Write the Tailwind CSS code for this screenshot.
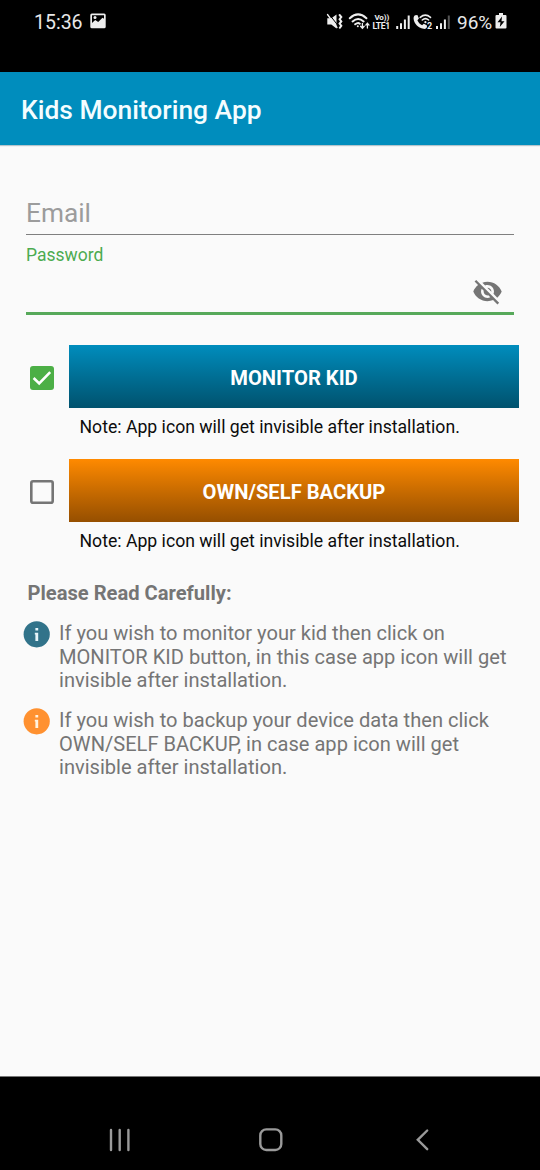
<!DOCTYPE html>
<html lang="en">
<head>
<meta charset="utf-8">
<title>Kids Monitoring App</title>
<script src="https://cdn.jsdelivr.net/npm/@tailwindcss/browser@4"></script>
</head>
<body class="w-[540px] h-[1170px] flex flex-col overflow-hidden bg-[#fafafa] font-['Roboto',sans-serif] text-[#757575]">
  <!-- Status bar -->
  <header class="h-[72px] shrink-0 bg-black text-[#e8e8e8]">
    <div class="h-[43px] flex items-center pl-[34px]">
      <span class="w-[56px] pt-[1px] text-[19.5px] leading-[43px] whitespace-nowrap">15:36</span>
      <svg class="w-[16px] h-[16px] -mt-[1px]" viewBox="0 0 16 16"><rect x=".3" y=".5" width="15.4" height="14.8" rx="1.5" fill="#eee"/><path d="M2 2.3h12v3.4l-1.5-1L8.2 9 5.2 7 2 10z" fill="#000"/><circle cx="5" cy="4.6" r="1.5" fill="#eee"/></svg>
      <svg class="ml-[220px] w-[126px] h-[24px]" viewBox="326 9 126 24" fill="none" stroke="#eee" stroke-width="1.7" stroke-linecap="round">
        <path d="M327.3 17.2h4l5.2-3.8v14l-5.2-4h-4z" fill="#eee" stroke="none"/>
        <path d="M329 13l10.5 13.5" stroke="#000" stroke-width="1"/>
        <path d="M327.5 13.5l9.5 13" stroke-width="1.3"/>
        <path d="M339.6 14l1.7 2-1.7 2.2 1.7 2.2-1.7 2.2 1.7 2.2-1.5 2" stroke-width="2"/>
        <path d="M349.8 17.2q8.3-7.6 16.6 0M352.6 20.4q5.5-4.8 11 0M355.2 23.3q2.8-2.2 4.6-.6" stroke-width="2"/>
        <circle cx="357.8" cy="25.2" r="1" fill="#eee" stroke="none"/>
        <path d="M362.4 22.5v4.6m-1.8-1.8 1.8 2 1.8-2M367.4 27v-4.6m-1.6 1.7 1.6-1.9 1.6 1.9" stroke-width="1.3"/>
        <g fill="#eee" stroke="none" font-family="Roboto, sans-serif" font-weight="700">
          <text x="374.4" y="19.3" font-size="8" letter-spacing="-.1">Vo))</text>
          <text x="372.5" y="28.3" font-size="8.6" letter-spacing="-.35">LTE1</text>
          <text x="427" y="27.7" font-size="9">2</text>
        </g>
        <g stroke-linecap="butt" stroke-width="2">
          <path d="M397.2 25v3M401 22.2V28M404.9 18.5V28M408.7 14.5V28"/>
          <path d="M437 25v3M441 22.2V28M444.9 18.5V28"/>
          <path d="M448.8 14.5V28" stroke="#555"/>
        </g>
        <path d="M415.2 14.2l2.2-.3 1.5 3.7-1.5 1.7c1 2.3 2.4 3.8 4.7 5l1.7-1.5 3 1.4.2 1.9c-.6 1.6-2 2-3.6 1.7-5.3-.9-9.4-5.2-9.8-10-.1-1.7.3-3 1.6-3.6z" fill="#eee" stroke="none"/>
        <path d="M420.2 16.4q5.1-4.4 10.3 0M422.3 19q3.1-2.7 6.3 0" stroke-width="1.6"/><circle cx="425.4" cy="21.2" r="1.1" fill="#eee" stroke="none"/>
      </svg>
      <span class="ml-[5px] w-[38px] pt-[1px] text-[19px] leading-[43px] whitespace-nowrap">96%</span>
      <svg class="w-[12px] h-[18px] -mt-[1px]" viewBox="0 0 12 18"><path d="M4 1h4v2h2.5q1 0 1 1v11.5q0 1-1 1h-9q-1 0-1-1V4q0-1 1-1H4z" fill="#eee"/><path d="M7 4.5 2.5 10.3h3L4.8 15l4.7-5.8h-3z" fill="#000"/></svg>
    </div>
  </header>
  <!-- App bar -->
  <div class="h-[73px] shrink-0 bg-[#008dbd] flex items-center pl-[21px] pt-[5px] border-b border-[#008dbd] shadow-[0_1px_1px_#b5c5cc]">
    <h1 class="text-[26.4px] leading-[31px] font-medium text-[#f4fdff] whitespace-nowrap">Kids Monitoring App</h1>
  </div>
  <main class="h-[931px] shrink-0">
    <div class="mx-[26px] h-[90px] border-b border-[#7f7f7f] flex items-end pb-[5px]">
      <span class="text-[26.25px] leading-[31px] text-[#9c9c9c]">Email</span>
    </div>
    <div class="mx-[26px] h-[80px] border-b-[3px] border-[#57a95a] flex flex-col">
      <span class="pt-[9px] text-[17.5px] leading-[22px] text-[#4cab50]">Password</span>
      <svg class="self-end mr-[11px] mt-[10px] w-[31px] h-[31px]" viewBox="0 0 24 24" fill="#757575"><path d="M12 7c2.76 0 5 2.24 5 5 0 .65-.13 1.26-.36 1.83l2.92 2.92c1.51-1.26 2.7-2.89 3.43-4.75-1.73-4.39-6-7.5-11-7.5-1.4 0-2.74.25-3.98.7l2.16 2.16C10.74 7.13 11.35 7 12 7zM2 4.27l2.28 2.28.46.46C3.08 8.3 1.78 10.02 1 12c1.73 4.39 6 7.5 11 7.5 1.55 0 3.03-.3 4.38-.84l.42.42L19.73 22 21 20.73 3.27 3 2 4.27zM7.53 9.8l1.55 1.55c-.05.21-.08.43-.08.65 0 1.66 1.34 3 3 3 .22 0 .44-.03.65-.08l1.55 1.55c-.67.33-1.41.53-2.2.53-2.76 0-5-2.24-5-5 0-.79.2-1.53.53-2.2zm4.31-.78l3.15 3.15.02-.16c0-1.66-1.34-3-3-3l-.17.01z"/></svg>
    </div>
    <div class="mt-[30px] h-[63px] flex items-center pl-[30px]">
      <div class="mt-[3px] w-[24px] h-[24px] rounded-[3px] bg-[#4caf46]">
        <svg class="w-[24px] h-[24px]" viewBox="0 0 24 24" fill="none" stroke="#fff" stroke-width="2.6"><path d="M3.6 12 9.2 17.4 20.2 6.2"/></svg>
      </div>
      <button class="ml-[15px] w-[450px] h-[63px] bg-linear-to-b from-[#008dbd] to-[#00526e] text-white font-bold text-[20.2px] leading-[23px] pt-[3px]">MONITOR KID</button>
    </div>
    <p class="pl-[79.5px] pt-[8px] h-[51px] text-[17.65px] leading-[22px] text-[#0c0c0c] whitespace-nowrap">Note: App icon will get invisible after installation.</p>
    <div class="h-[63px] flex items-center pl-[30px]">
      <svg class="mt-[3px] w-[24px] h-[24px]" viewBox="0 0 24 24"><rect x="1.3" y="1.3" width="21.4" height="21.4" rx="1.8" fill="none" stroke="#757575" stroke-width="2.6"/></svg>
      <button class="ml-[15px] w-[450px] h-[63px] bg-linear-to-b from-[#ff8a00] to-[#964f00] text-white font-bold text-[20.2px] leading-[23px] pt-[3px]">OWN/SELF BACKUP</button>
    </div>
    <p class="pl-[79.5px] pt-[8px] h-[51px] text-[17.65px] leading-[22px] text-[#0c0c0c] whitespace-nowrap">Note: App icon will get invisible after installation.</p>
    <h2 class="pl-[27.5px] pt-[8px] text-[20.15px] leading-[24px] font-bold whitespace-nowrap">Please Read Carefully:</h2>
    <div class="mt-[16px] pl-[23px] flex items-start gap-[9px]">
      <svg class="w-[27px] h-[27px] shrink-0" viewBox="0 0 27 27"><circle cx="13.7" cy="13.3" r="13.1" fill="#31738a"/><path d="M12.4 7h2.8v2.5h-2.8zM11.8 11.8h3.4v8.2h-2.8v-6.4h-.6z" fill="#e6f5fa"/></svg>
      <p class="pt-[1px] text-[20.08px] leading-[23.5px] whitespace-nowrap">If you wish to monitor your kid then click on<br>MONITOR KID button, in this case app icon will get<br>invisible after installation.</p>
    </div>
    <div class="mt-[15.5px] pl-[23px] flex items-start gap-[9px]">
      <svg class="w-[27px] h-[27px] shrink-0" viewBox="0 0 27 27"><circle cx="13.7" cy="13.3" r="13.1" fill="#ff9130"/><path d="M12.4 7h2.8v2.5h-2.8zM11.8 11.8h3.4v8.2h-2.8v-6.4h-.6z" fill="#fff3e0"/></svg>
      <p class="pt-[1px] text-[20.08px] leading-[23.5px] whitespace-nowrap">If you wish to backup your device data then click<br>OWN/SELF BACKUP, in case app icon will get<br>invisible after installation.</p>
    </div>
  </main>
  <!-- Navigation bar -->
  <nav class="h-[94px] shrink-0 bg-black border-t border-[#777] flex items-end">
    <svg class="w-[540px] h-[60px]" viewBox="0 1110 540 60" fill="none" stroke="#9a9a9a" stroke-width="2.4" stroke-linecap="round">
      <path d="M111 1130v20M119.7 1130v20M128.4 1130v20"/>
      <rect x="260.3" y="1129.4" width="21" height="20.6" rx="6"/>
      <path d="M427.2 1130.5l-9.4 9.3 9.4 9.4"/>
    </svg>
  </nav>
</body>
</html>
